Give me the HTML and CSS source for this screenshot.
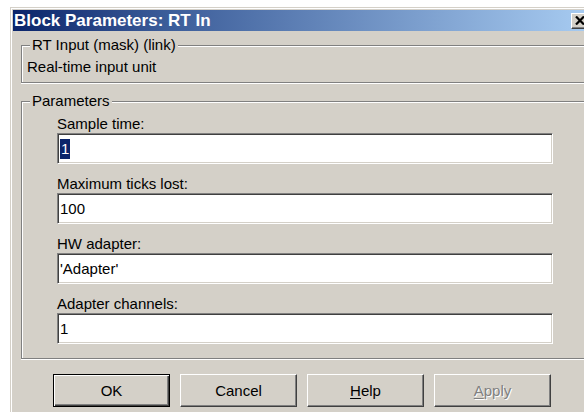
FILE: index.html
```html
<!DOCTYPE html>
<html>
<head>
<meta charset="utf-8">
<title>Block Parameters: RT In</title>
<link rel="stylesheet" href="styles.css">
</head>
<body>
<div class="window">
  <div class="titlebar">
    <span class="title">Block Parameters: RT In</span>
    <span class="close-btn">
      <svg width="10" height="9" viewBox="0 0 10 9"><path d="M1 0.5 L9 8.5 M9 0.5 L1 8.5" stroke="#000" stroke-width="2.2" fill="none"/></svg>
    </span>
  </div>
  <div class="content">
    <fieldset class="group group-info">
      <legend>RT Input (mask) (link)</legend>
      <div class="desc">Real-time input unit</div>
    </fieldset>
    <fieldset class="group group-params">
      <legend>Parameters</legend>
      <div class="param">
        <label class="param-label">Sample time:</label>
        <div class="field"><span class="selected">1</span></div>
      </div>
      <div class="param">
        <label class="param-label">Maximum ticks lost:</label>
        <div class="field">100</div>
      </div>
      <div class="param">
        <label class="param-label">HW adapter:</label>
        <div class="field">'Adapter'</div>
      </div>
      <div class="param">
        <label class="param-label">Adapter channels:</label>
        <div class="field">1</div>
      </div>
    </fieldset>
    <div class="buttons">
      <button class="btn btn-default">OK</button>
      <button class="btn">Cancel</button>
      <button class="btn"><u>H</u>elp</button>
      <button class="btn btn-disabled"><u>A</u>pply</button>
    </div>
  </div>
</div>
</body>
</html>
```
FILE: styles.css
```css
html, body {
  margin: 0;
  padding: 0;
  background: #ffffff;
  overflow: hidden;
  height: 412px;
}

body {
  font-family: "Liberation Sans", Arial, sans-serif;
  font-size: 15px;
  color: #000;
}

/* dialog frame; the right part runs off the edge of the view */
.window {
  box-sizing: border-box;
  width: 600px;
  height: 410px;
  margin: 7px 0 0 10px;
  padding: 3px 3px 0 3px;
  overflow: hidden;
  background: #d4d0c8;
  box-shadow: inset 1px 1px 0 #d4d0c8, inset 2px 2px 0 #ffffff;
}

.titlebar {
  height: 21px;
  display: flex;
  align-items: center;
  justify-content: space-between;
  background: linear-gradient(to right, #0a246a 0%, #3a5b98 25%, #a6caf0 96%);
}

.title {
  color: #fff;
  font-weight: bold;
  font-size: 17px;
  line-height: 21px;
  padding-left: 1px;
  white-space: nowrap;
}

.close-btn {
  box-sizing: border-box;
  flex: none;
  width: 20px;
  height: 16px;
  margin-right: 16px;
  background: #d4d0c8;
  border: 1px solid;
  border-color: #ffffff #404040 #404040 #ffffff;
  box-shadow: inset -1px -1px 0 #808080;
  display: flex;
  align-items: center;
  justify-content: flex-start;
  padding-left: 3px;
}

.close-btn svg {
  display: block;
}

.content {
  padding: 0 0 0 8px;
}

/* etched group boxes, open on the right where the dialog is cut */
.group {
  box-sizing: border-box;
  width: 590px;
  margin: 0;
  min-width: 0;
  border: 1px solid #808080;
  border-right: none;
  box-shadow: inset 1px 1px 0 #ffffff, 0 1px 0 #ffffff;
}

.group legend {
  margin-left: 3px;
  padding: 0 2px;
  line-height: 18px;
  background: #d4d0c8;
  position: relative;
}

.group-info {
  margin-top: 5px;
  padding: 4px 5px 7px 5px;
}

.desc {
  line-height: 17px;
}

.group-params {
  margin-top: 9px;
  padding: 5px 5px 14px 35px;
  display: flex;
  flex-direction: column;
  gap: 11px;
}

.group-params legend {
  margin-left: -27px;
}

.param {
  display: flex;
  flex-direction: column;
}

.param-label {
  line-height: 17px;
  margin-bottom: 1px;
}

.field {
  box-sizing: border-box;
  width: 496px;
  height: 31px;
  background: #ffffff;
  border: 1px solid;
  border-color: #808080 #ffffff #ffffff #808080;
  box-shadow: inset 1px 1px 0 #404040, inset -1px -1px 0 #d4d0c8;
  display: flex;
  align-items: center;
  padding-left: 2px;
  white-space: nowrap;
}

.selected {
  background: #0a246a;
  color: #ffffff;
  line-height: 20px;
  padding: 0 1px;
}

/* dialog buttons */
.buttons {
  display: flex;
  gap: 10px;
  padding-left: 32px;
  margin-top: 15px;
}

.btn {
  box-sizing: border-box;
  width: 117px;
  height: 33px;
  margin: 0;
  padding: 0;
  font-family: "Liberation Sans", Arial, sans-serif;
  font-size: 15px;
  color: #000;
  background: #d4d0c8;
  border: 1px solid;
  border-color: #ffffff #404040 #404040 #ffffff;
  box-shadow: inset -1px -1px 0 #808080;
  border-radius: 0;
}

.btn u {
  text-decoration: underline;
  text-underline-offset: 2px;
}

.btn-default {
  border: 1px solid #000000;
  box-shadow: inset 1px 1px 0 #ffffff, inset -1px -1px 0 #404040, inset -2px -2px 0 #808080;
}

.btn-disabled {
  color: #808080;
  text-shadow: 1px 1px 0 #ffffff;
}
```
